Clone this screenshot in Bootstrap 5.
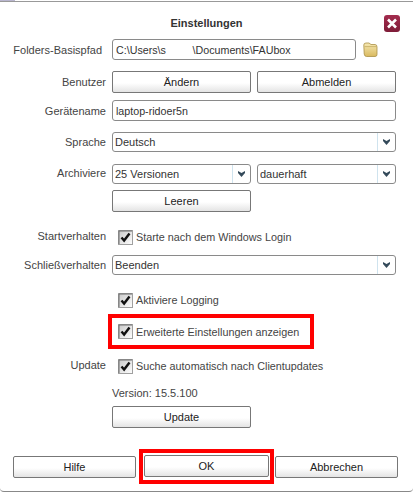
<!DOCTYPE html>
<html lang="de">
<head>
  <meta charset="UTF-8" />
  <title>Einstellungen</title>
  <link href="https://cdn.jsdelivr.net/npm/bootstrap@5.3.0/dist/css/bootstrap.min.css" rel="stylesheet"/>
  <style>
    html, body {
      height: 100%;
      background: #fff;
      overflow: hidden;
    }
    body {
      font-family: "Liberation Sans", Arial, sans-serif;
      font-size: 11px;
      line-height: 14px;
      color: #333;
    }
    .dlg {
      height: 491px;
      margin-top: 1px;
      padding-top: 13px;
      border-top: 1px solid #999;
      border-bottom: 1px solid #888;
      border-radius: 0 0 4px 4px;
      position: relative;
    }
    .dlg::before {
      content: "";
      position: absolute;
      left: 0;
      top: -2px;
      width: 15px;
      height: 1px;
      background: #b9b6cf;
    }
    .dlg-head {
      height: 17px;
      position: relative;
    }
    .dlg-title {
      font-weight: 700;
      color: #333;
      line-height: 17px;
    }
    .close-x {
      position: absolute;
      right: 13px;
      top: 0;
      width: 16px;
      height: 17px;
      background: linear-gradient(#a32c4e, #7e1c38);
      border-radius: 3px;
      padding: 0;
      border: 0;
      display: flex;
      align-items: center;
      justify-content: center;
    }
    .field-row {
      display: flex;
      align-items: center;
      padding-right: 17px;
    }
    .field-label {
      width: 106px;
      margin-right: 6px;
      margin-bottom: 0;
      text-align: right;
      flex: none;
      color: #444;
    }
    .path-label {
      padding-right: 4px;
    }
    .field-label.label-up {
      margin-top: -1px;
      margin-bottom: 1px;
    }
    .field-body {
      flex: 1;
      display: flex;
      align-items: center;
      gap: 6px;
      min-width: 0;
    }
    .half {
      width: 139px;
      flex: none;
    }
    .form-control.dlg-input, .form-select.dlg-select {
      height: 21px;
      min-height: 0;
      padding: 0 3px;
      font-size: 10.7px;
      line-height: 19px;
      color: #333;
      border: 1px solid #8a8a8a;
      border-radius: 3px;
      box-shadow: none;
    }
    .form-control.path-input {
      width: 244px;
      flex: none;
      white-space: pre;
    }
    .folder-ico {
      flex: none;
      margin-left: 1px;
    }
    .form-select.dlg-select {
      height: 20px;
      font-size: 11px;
      padding: 0 20px 0 2px;
      background-image:
        url("data:image/svg+xml,%3csvg xmlns='http://www.w3.org/2000/svg' viewBox='0 0 7 6'%3e%3cpath fill='%23344a5a' d='M0 0l3.5 2L7 0v2L3.5 6 0 2z'/%3e%3c/svg%3e"),
        linear-gradient(#cfe3ee, #cfe3ee);
      background-repeat: no-repeat;
      background-size: 7px 6px, 1px 18px;
      background-position: right 5px center, right 17px center;
    }
    .btn.dlg-btn {
      height: 22px;
      padding: 0;
      font-size: 11px;
      line-height: 20px;
      color: #222;
      border: 1px solid #777;
      border-radius: 2px;
      background: linear-gradient(#fff 0%, #fff 55%, #e4e4e4 100%);
    }
    .check-line {
      display: flex;
      align-items: center;
      gap: 3px;
      height: 14px;
      font-size: 10.8px;
      color: #444;
    }
    .tick {
      width: 15px;
      height: 15px;
      flex: none;
      margin-left: 6px;
    }
    .version-line {
      color: #444;
    }
    .mark-box {
      width: 206px;
      height: 35px;
      margin-left: 108px;
      border: 4px solid #f00;
      display: flex;
      align-items: center;
    }
    .foot-row {
      display: flex;
      align-items: center;
      padding-left: 13px;
    }
    .foot-btn {
      width: 123px;
      flex: none;
    }
    .ok-box {
      width: 135px;
      height: 35px;
      margin: 0 1px 0 3px;
      border: 4px solid #f00;
      padding: 2px 1px;
      flex: none;
    }
    .ok-box .btn.dlg-btn { width: 100%; }
    .m6 { margin-top: 6px; }
    .m7 { margin-top: 7px; }
    .m10 { margin-top: 10px; }
    .m11 { margin-top: 11px; }
    .m12 { margin-top: 12px; }
    .m13 { margin-top: 13px; }
    .m18 { margin-top: 18px; }
    .m21 { margin-top: 21px; }
  </style>
</head>
<body>
  <svg width="0" height="0" class="position-absolute">
    <defs>
      <linearGradient id="tickFill" x1="0" y1="0" x2="1" y2="1">
        <stop offset="0" stop-color="#c8c8c8"/>
        <stop offset="1" stop-color="#ffffff"/>
      </linearGradient>
      <linearGradient id="folderFill" x1="0" y1="0" x2="0" y2="1">
        <stop offset="0" stop-color="#f6e9b4"/>
        <stop offset="1" stop-color="#d9b95f"/>
      </linearGradient>
    </defs>
    <symbol id="tick" viewBox="0 0 15 15">
      <rect x=".5" y=".5" width="14" height="14" fill="url(#tickFill)" stroke="#a0a0a0"/>
      <path d="M1 14V1h13" fill="none" stroke="#6f6f6f"/>
      <path d="M3.5 7.5l2.6 3L11.5 3.5" fill="none" stroke="#111" stroke-width="2.4"/>
    </symbol>
  </svg>

  <div class="dlg">
    <div class="dlg-head text-center">
      <span class="dlg-title">Einstellungen</span>
      <button class="close-x" type="button" aria-label="Schließen">
        <svg width="12" height="11" viewBox="0 0 12 11"><path d="M2 1.5l8 8M10 1.5l-8 8" stroke="#fff" stroke-width="2.6" fill="none"/></svg>
      </button>
    </div>

    <div class="field-row m7">
      <label class="field-label path-label">Folders-Basispfad</label>
      <div class="field-body">
        <input class="form-control dlg-input path-input" value="C:\Users\s         \Documents\FAUbox">
        <svg class="folder-ico" width="15" height="15" viewBox="0 0 15 15">
          <path d="M.8 3 Q.8 1 3 1 H6 L8 2.5 H12 Q14 2.5 14 5 V12.5 Q14 14.5 12 14.5 H3.5 Q1.5 14.5 1.2 12 Z" fill="url(#folderFill)" stroke="#a98f45" stroke-width=".8"/>
          <path d="M1.6 4.6 H13.4" stroke="#b59a4e" stroke-width=".6"/>
        </svg>
      </div>
    </div>

    <div class="field-row m11">
      <label class="field-label">Benutzer</label>
      <div class="field-body">
        <button class="btn dlg-btn half" type="button">Ändern</button>
        <button class="btn dlg-btn half" type="button">Abmelden</button>
      </div>
    </div>

    <div class="field-row m7">
      <label class="field-label">Gerätename</label>
      <div class="field-body">
        <input class="form-control dlg-input" value="laptop-ridoer5n">
      </div>
    </div>

    <div class="field-row m11">
      <label class="field-label">Sprache</label>
      <div class="field-body">
        <select class="form-select dlg-select"><option>Deutsch</option></select>
      </div>
    </div>

    <div class="field-row m12">
      <label class="field-label label-up">Archiviere</label>
      <div class="field-body">
        <select class="form-select dlg-select half"><option>25 Versionen</option></select>
        <select class="form-select dlg-select half"><option>dauerhaft</option></select>
      </div>
    </div>

    <div class="field-row m6">
      <span class="field-label"></span>
      <div class="field-body">
        <button class="btn dlg-btn half" type="button">Leeren</button>
      </div>
    </div>

    <div class="field-row m18">
      <label class="field-label label-up">Startverhalten</label>
      <div class="check-line">
        <svg class="tick"><use href="#tick"/></svg>
        <span>Starte nach dem Windows Login</span>
      </div>
    </div>

    <div class="field-row m11">
      <label class="field-label">Schließverhalten</label>
      <div class="field-body">
        <select class="form-select dlg-select"><option>Beenden</option></select>
      </div>
    </div>

    <div class="field-row m18">
      <span class="field-label"></span>
      <div class="check-line">
        <svg class="tick"><use href="#tick"/></svg>
        <span>Aktiviere Logging</span>
      </div>
    </div>

    <div class="mark-box m7">
      <div class="check-line">
        <svg class="tick"><use href="#tick"/></svg>
        <span>Erweiterte Einstellungen anzeigen</span>
      </div>
    </div>

    <div class="field-row m10">
      <label class="field-label label-up">Update</label>
      <div class="check-line">
        <svg class="tick"><use href="#tick"/></svg>
        <span>Suche automatisch nach Clientupdates</span>
      </div>
    </div>

    <div class="field-row m13">
      <span class="field-label"></span>
      <div class="version-line">Version: 15.5.100</div>
    </div>

    <div class="field-row m6">
      <span class="field-label"></span>
      <div class="field-body">
        <button class="btn dlg-btn half" type="button">Update</button>
      </div>
    </div>

    <div class="foot-row m21">
      <button class="btn dlg-btn foot-btn" type="button">Hilfe</button>
      <div class="ok-box">
        <button class="btn dlg-btn" type="button">OK</button>
      </div>
      <button class="btn dlg-btn foot-btn" type="button">Abbrechen</button>
    </div>
  </div>

  <script src="https://cdn.jsdelivr.net/npm/bootstrap@5.3.0/dist/js/bootstrap.bundle.min.js"></script>
</body>
</html>
